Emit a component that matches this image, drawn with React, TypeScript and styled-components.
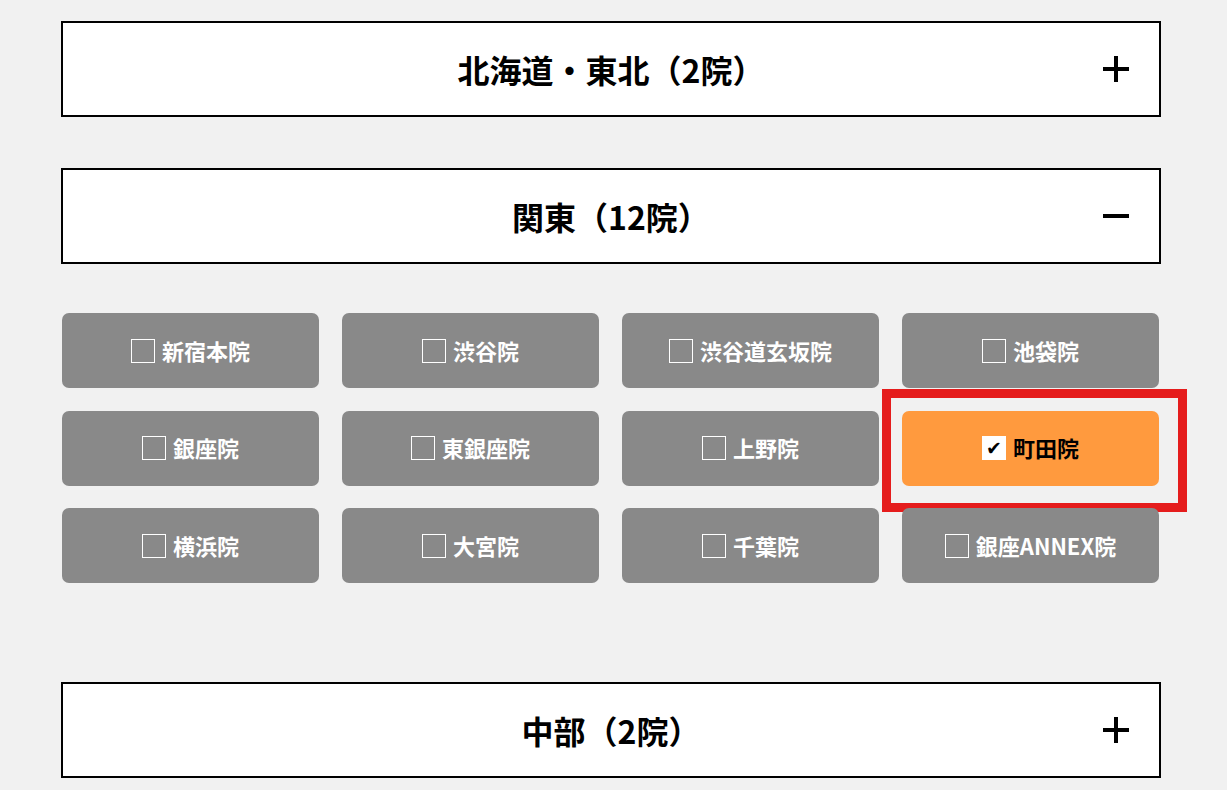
import React, { useState } from "react"
import styled, { createGlobalStyle } from "styled-components"

type Region = {
  name: string
  clinics: string[]
}

const regions: Region[] = [
  { name: "北海道・東北（2院）", clinics: ["札幌院", "仙台院"] },
  {
    name: "関東（12院）",
    clinics: ["新宿本院", "渋谷院", "渋谷道玄坂院", "池袋院", "銀座院", "東銀座院", "上野院", "町田院", "横浜院", "大宮院", "千葉院", "銀座ANNEX院"],
  },
  { name: "中部（2院）", clinics: ["名古屋院", "静岡院"] },
]

const GlobalStyle = createGlobalStyle`
  html, body {
    margin: 0;
    padding: 0;
    background: #f1f1f1;
  }
  body {
    font-family: "Noto Sans CJK JP", "Noto Sans", "Liberation Sans", sans-serif;
  }
`

export default function App() {
  const [open, setOpen] = useState<string>("関東（12院）")
  const [checked, setChecked] = useState<string[]>(["町田院"])

  const toggleClinic = (clinic: string) => {
    setChecked(checked.includes(clinic) ? checked.filter((c) => c !== clinic) : [...checked, clinic])
  }

  return <>
    <GlobalStyle />
    <Page>
      {regions.map((region) => {
        const isOpen = open === region.name
        return <Section key={region.name} $open={isOpen}>
          <Header onClick={() => setOpen(isOpen ? "" : region.name)}>
            <Title>{region.name}</Title>
            <Toggle $open={isOpen} />
          </Header>
          {isOpen && <Grid>
            {region.clinics.map((clinic) => {
              const on = checked.includes(clinic)
              return <Cell key={clinic} $marked={on}>
                <ClinicButton $on={on} onClick={() => toggleClinic(clinic)}>
                  <Box $on={on}>{on ? "✔" : ""}</Box>
                  <Label>{clinic}</Label>
                </ClinicButton>
              </Cell>
            })}
          </Grid>}
        </Section>
      })}
    </Page>
  </>
}

const Page = styled.div`
  width: 1100px;
  margin-left: 61px;
  padding-top: 21px;
`

const Section = styled.section<{ $open: boolean }>`
  margin-bottom: ${(p) => (p.$open ? "99px" : "51px")};
`

const Header = styled.div`
  position: relative;
  display: flex;
  align-items: center;
  justify-content: center;
  height: 92px;
  background: #fff;
  border: 2px solid #000;
  cursor: pointer;
`

const Title = styled.h2`
  margin: 0;
  font-size: 32px;
  line-height: 1;
  font-weight: 700;
  color: #000;
`

const Toggle = styled.span<{ $open: boolean }>`
  position: absolute;
  right: 30px;
  top: 50%;
  width: 26px;
  height: 26px;
  transform: translateY(-50%);

  &::before, &::after {
    content: "";
    position: absolute;
    background: #000;
  }

  &::before {
    left: 0;
    right: 0;
    top: 11px;
    height: 4px;
  }

  &::after {
    display: ${(p) => (p.$open ? "none" : "block")};
    top: 0;
    bottom: 0;
    left: 11px;
    width: 4px;
  }
`

const Grid = styled.div`
  display: grid;
  grid-template-columns: repeat(4, 257px);
  column-gap: 23px;
  row-gap: 22.5px;
  margin: 49px 0 0 1px;
`

const Cell = styled.div<{ $marked: boolean }>`
  position: relative;

  &::after {
    content: "";
    display: ${(p) => (p.$marked ? "block" : "none")};
    position: absolute;
    left: -20px;
    right: -28px;
    top: -22px;
    bottom: -26px;
    border: 9px solid #e51c1c;
    pointer-events: none;
  }
`

const ClinicButton = styled.button<{ $on: boolean }>`
  display: flex;
  align-items: center;
  justify-content: center;
  gap: 7px;
  width: 100%;
  height: 75px;
  padding: 0;
  border: none;
  border-radius: 7px;
  background: ${(p) => (p.$on ? "#ff9a3e" : "#898989")};
  color: ${(p) => (p.$on ? "#000" : "#fff")};
  font-family: "Noto Sans CJK JP", "Noto Sans", "Liberation Sans", sans-serif;
  font-size: 22px;
  font-weight: 700;
  cursor: pointer;
`

const Label = styled.span`
  line-height: 1;
  padding-bottom: 2px;
`

const Box = styled.span<{ $on: boolean }>`
  display: flex;
  align-items: center;
  justify-content: center;
  box-sizing: border-box;
  width: 24px;
  height: 24px;
  border: 1px solid #fff;
  background: ${(p) => (p.$on ? "#fff" : "transparent")};
  color: #000;
  font-family: "DejaVu Sans", sans-serif;
  font-size: 19px;
  line-height: 1;
`
